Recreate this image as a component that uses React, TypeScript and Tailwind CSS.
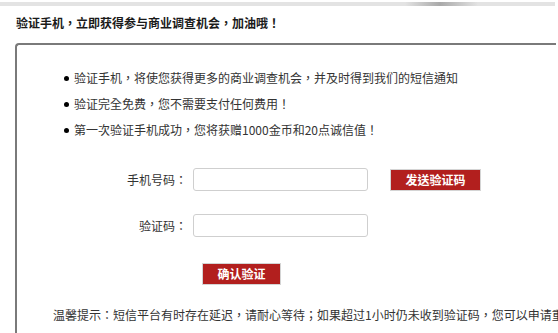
import React from "react";

export default function App() {
  const font = { fontFamily: '"Noto Sans CJK TC", "Noto Sans CJK SC", "Noto Sans", sans-serif' };
  return (
    <div
      className="w-[558px] h-[333px] overflow-hidden bg-white text-[#333] font-['Noto_Sans_CJK_TC',sans-serif]"
      style={font}
    >
      <div className="mt-[2px] h-[4px] w-[555px] bg-[linear-gradient(to_right,#e3e3e3_405px,#a9a9a9_440px,#e3e3e3_478px)]" />
      <div className="mt-[9px] pl-[16px] text-[12px] leading-[16px] font-bold text-[#1a1a1a]">
        验证手机，立即获得参与商业调查机会，加油哦！
      </div>
      <div className="mt-[12px] ml-[15px] w-[541px] h-[400px] border-l-2 border-t-2 border-[#7a7a7a] rounded-tl-[4px]">
        <ul className="pt-[20px] text-[12px] leading-[26px]">
          {[
            "验证手机，将使您获得更多的商业调查机会，并及时得到我们的短信通知",
            "验证完全免费，您不需要支付任何费用！",
            "第一次验证手机成功，您将获赠1000金币和20点诚信值！",
          ].map((t) => (
            <li key={t} className="flex items-center pl-[47px]">
              <span className="w-[5px] h-[5px] rounded-full bg-black mr-[5px] shrink-0" />
              <span>{t}</span>
            </li>
          ))}
        </ul>
        <div className="mt-[25px] flex items-center text-[12px]">
          <span className="w-[170px] text-right">手机号码：</span>
          <input
            type="text"
            className="ml-[6px] w-[175px] h-[23px] border border-[#cfcfcf] rounded-[3px] outline-none"
          />
          <button className="ml-[22px] w-[91px] h-[22px] bg-[#b21f1e] border border-[#d4d4d4] text-white font-bold text-[12px] leading-[20px]">
            发送验证码
          </button>
        </div>
        <div className="mt-[23px] flex items-center text-[12px]">
          <span className="w-[170px] text-right">验证码：</span>
          <input
            type="text"
            className="ml-[6px] w-[175px] h-[23px] border border-[#cfcfcf] rounded-[3px] outline-none"
          />
        </div>
        <div className="mt-[23px] pl-[185px]">
          <button className="w-[79px] h-[22px] bg-[#b21f1e] border border-[#d4d4d4] text-white font-bold text-[12px] leading-[20px]">
            确认验证
          </button>
        </div>
        <div className="mt-[22px] pl-[36px] text-[12px] leading-[16px] whitespace-nowrap">
          温馨提示：短信平台有时存在延迟，请耐心等待；如果超过1小时仍未收到验证码，您可以申请重新发送。
        </div>
      </div>
    </div>
  );
}
